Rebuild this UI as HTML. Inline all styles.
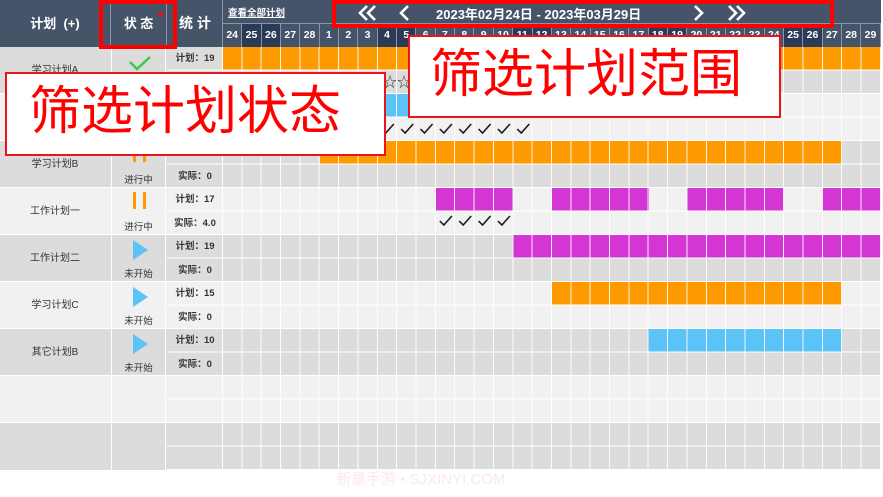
<!DOCTYPE html>
<html><head><meta charset="utf-8"><style>
*{margin:0;padding:0;box-sizing:border-box}
body{width:883px;height:497px;background:#fff;position:relative;overflow:hidden;font-family:"Liberation Sans","Noto Sans CJK SC",sans-serif}
.a{position:absolute}
.hd{background:#46546a;color:#fff;font-weight:bold}
.days{position:absolute;left:223px;top:24px;height:23px;display:flex}
.days div{width:19.35px;height:23px;color:#fff;font-size:10.5px;font-weight:bold;text-align:center;line-height:23px;border-right:1px solid #8a96a8}
.days .w{background:#2b3a56}
.row{position:absolute;left:0;width:881px;height:47px}
.d{background:#dcdcdc}.l{background:#f1f1f1}
.nm{position:absolute;left:0;width:110px;height:47px;line-height:47px;text-align:center;font-size:10px;color:#333}
.st{position:absolute;left:111px;width:55px;top:0;height:47px;border-left:1px solid #fff;border-right:1px solid #fff}
.st span{position:absolute;bottom:2px;left:0;width:100%;text-align:center;font-size:9.5px;color:#333}
.sx{position:absolute;left:167px;width:56px;height:23px;line-height:23px;text-align:center;font-size:9.5px;color:#333;font-weight:bold}
.bar{position:absolute;height:23px}
.o{background:#ff9900}.m{background:#d436d4}.b{background:#5bc3f5}
.play{position:absolute;left:21px;top:5px;width:0;height:0;border-left:15px solid #5bc3f5;border-top:10px solid transparent;border-bottom:10px solid transparent}
.pz{position:absolute;left:21px;top:4px;width:3px;height:17px;background:#ff9900;box-shadow:10px 0 0 #ff9900}
.box{position:absolute;background:#fff;border:2px solid #e8141e;color:#f00;white-space:nowrap}
</style></head><body>
<div class="a hd" style="left:0;top:0;width:881px;height:47px"></div>
<div class="a" style="left:0;top:0;width:110px;height:47px;line-height:47px;text-align:center;color:#fff;font-weight:bold;font-size:13px">计划 &nbsp;(+)</div>
<div class="a" style="left:110px;top:0;width:1px;height:47px;background:#8a96a8"></div>
<div class="a" style="left:111px;top:0;width:55px;height:47px;line-height:47px;text-align:center;color:#fff;font-weight:bold;font-size:13px">状 态</div>
<div class="a" style="left:158px;top:12px;width:5px;height:5px;border-radius:50%;background:#e8141e"></div>
<div class="a" style="left:166px;top:0;width:1px;height:47px;background:#8a96a8"></div>
<div class="a" style="left:167px;top:0;width:56px;height:47px;line-height:47px;text-align:center;color:#fff;font-weight:bold;font-size:14px">统 计</div>
<div class="a" style="left:222px;top:0;width:1px;height:47px;background:#8a96a8"></div>
<div class="a" style="left:228px;top:5px;color:#fff;font-size:9.5px;font-weight:bold;text-decoration:underline">查看全部计划</div>
<div class="a" style="left:223px;top:23px;width:658px;height:1px;background:#8a96a8"></div>
<svg class="a" style="left:355px;top:3px" width="400" height="20"><g stroke="#fff" stroke-width="2.6" fill="none"><path d="M12 3 L5 10 L12 17 M20 3 L13 10 L20 17"/><path d="M53 3 L46 10 L53 17"/><path d="M340 3 L347 10 L340 17"/><path d="M374 3 L381 10 L374 17 M382 3 L389 10 L382 17"/></g></svg>
<div class="a" style="left:436px;top:4px;color:#fff;font-size:13px;font-weight:bold">2023年02月24日 - 2023年03月29日</div>
<div class="days">
<div>24</div><div class="w">25</div><div class="w">26</div><div>27</div><div>28</div><div>1</div><div>2</div><div>3</div><div class="w">4</div><div class="w">5</div><div>6</div><div>7</div><div>8</div><div>9</div><div>10</div><div class="w">11</div><div class="w">12</div><div>13</div><div>14</div><div>15</div><div>16</div><div>17</div><div class="w">18</div><div class="w">19</div><div>20</div><div>21</div><div>22</div><div>23</div><div>24</div><div class="w">25</div><div class="w">26</div><div>27</div><div>28</div><div>29</div>
</div>
<div class="row d" style="top:47px"><div class="nm">学习计划A</div><div class="st"><svg class="a" style="left:16px;top:8px" width="24" height="16"><path d="M2 7 L9 14 L22 2" stroke="#3cc94a" stroke-width="2.5" fill="none"/></svg></div><div class="sx" style="top:0">计划：19</div><div class="sx" style="top:24px">实际：0</div></div>
<div class="row l" style="top:94px"><div class="st"></div></div>
<div class="row d" style="top:141px"><div class="nm">学习计划B</div><div class="st"><div class="pz"></div><span>进行中</span></div><div class="sx" style="top:0">计划：19</div><div class="sx" style="top:24px">实际：0</div></div>
<div class="row l" style="top:188px"><div class="nm">工作计划一</div><div class="st"><div class="pz"></div><span>进行中</span></div><div class="sx" style="top:0">计划：17</div><div class="sx" style="top:24px">实际：4.0</div></div>
<div class="row d" style="top:235px"><div class="nm">工作计划二</div><div class="st"><div class="play"></div><span>未开始</span></div><div class="sx" style="top:0">计划：19</div><div class="sx" style="top:24px">实际：0</div></div>
<div class="row l" style="top:282px"><div class="nm">学习计划C</div><div class="st"><div class="play"></div><span>未开始</span></div><div class="sx" style="top:0">计划：15</div><div class="sx" style="top:24px">实际：0</div></div>
<div class="row d" style="top:329px"><div class="nm">其它计划B</div><div class="st"><div class="play"></div><span>未开始</span></div><div class="sx" style="top:0">计划：10</div><div class="sx" style="top:24px">实际：0</div></div>
<div class="row l" style="top:376px"><div class="st"></div></div>
<div class="row d" style="top:423px"><div class="st"></div></div>
<div class="bar o" style="left:223px;top:47px;width:658px"></div>
<div class="bar b" style="left:223px;top:94px;width:194px"></div>
<div class="bar o" style="left:320px;top:141px;width:522px"></div>
<div class="bar m" style="left:436px;top:188px;width:77px"></div>
<div class="bar m" style="left:552px;top:188px;width:97px"></div>
<div class="bar m" style="left:687px;top:188px;width:97px"></div>
<div class="bar m" style="left:822px;top:188px;width:59px"></div>
<div class="bar m" style="left:513px;top:235px;width:368px"></div>
<div class="bar o" style="left:552px;top:282px;width:290px"></div>
<div class="bar b" style="left:648px;top:329px;width:194px"></div>
<svg class="a" style="left:223px;top:117px" width="658" height="120">
<defs><pattern id="ck" x="0" y="0" width="19.35" height="23" patternUnits="userSpaceOnUse"><path d="M4 12 L8 16 L16 7" stroke="#111" stroke-width="1.5" fill="none"/></pattern></defs>
<rect x="154.8" y="0" width="154.8" height="23" fill="url(#ck)"/>
<rect x="212.85" y="94" width="77.4" height="23" fill="url(#ck)"/>
</svg>
<div class="a" style="left:383px;top:72px;font-size:14px;color:#333">☆☆</div>
<div class="a" style="left:223px;top:47px;width:658px;height:423px;background:repeating-linear-gradient(to right,transparent 0,transparent 18.35px,rgba(255,255,255,.9) 18.35px,rgba(255,255,255,.9) 19.35px)"></div>
<div class="a" style="left:167px;top:47px;width:714px;height:423px;background:repeating-linear-gradient(to bottom,transparent 0,transparent 22.5px,#fff 22.5px,#fff 23.5px)"></div>
<div class="a" style="left:0;top:93px;width:881px;height:1px;background:#fff;box-shadow:0 47px #fff,0 94px #fff,0 141px #fff,0 188px #fff,0 235px #fff,0 282px #fff,0 329px #fff"></div>
<div class="a" style="left:222px;top:47px;width:1px;height:423px;background:#fff"></div>
<div class="a" style="left:99px;top:0;width:78px;height:49px;border:4px solid #f00"></div>
<div class="a" style="left:332px;top:0;width:502px;height:28px;border:4px solid #f00"></div>
<div class="box" style="left:5px;top:72px;width:381px;height:84px;font-size:52px;line-height:76px;padding-left:22px">筛选计划状态</div>
<div class="box" style="left:408px;top:35px;width:373px;height:83px;font-size:52px;line-height:76px;padding-left:20px">筛选计划范围</div>
<div class="a" style="left:336px;top:468px;font-size:15px;color:#fbe6f7">新意手游 • SJXINYI.COM</div>
</body></html>
